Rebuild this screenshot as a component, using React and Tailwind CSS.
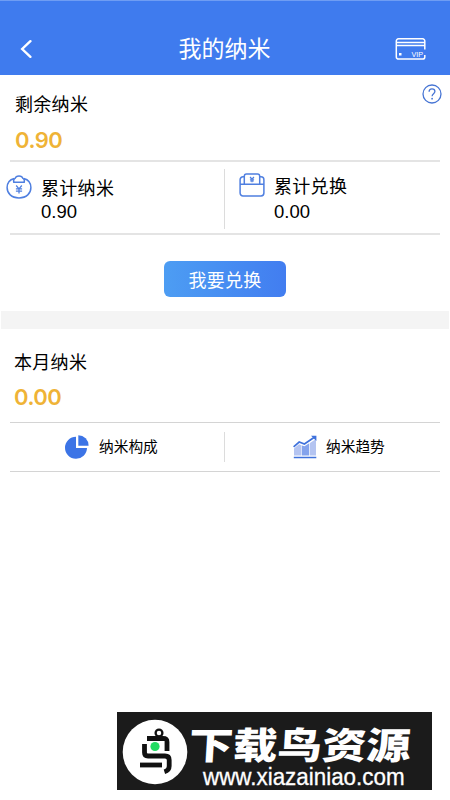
function BackIcon() {
  return (
    <svg className="h-5 w-3" viewBox="0 0 12 20" fill="none" stroke="white" strokeWidth="2.4" strokeLinecap="round">
      <path d="M10.4 2.2 2.2 10l8.2 7.8" />
    </svg>
  );
}

function VipCardIcon() {
  return (
    <svg className="h-[23px] w-[31px]" viewBox="0 0 31 23" fill="none" stroke="white" strokeWidth="1.5">
      <path d="M29.8 11.5V3a2.2 2.2 0 0 0-2.2-2.2H3.5A2.2 2.2 0 0 0 1.3 3v15.900a2.2 2.2 0 0 0 2.2 2.2h24.100a2.2 2.2 0 0 0 2.2-2.200V17" />
      <path d="M1.3 4.500h28.500M1.3 7.500h28.500" />
      <rect x="4" y="15" width="2.500" height="2.500" fill="white" stroke="none" />
      <text x="16.500" y="18.700" fontSize="7.200" fontFamily="Liberation Sans, sans-serif" fill="white" stroke="none">
        VIP
      </text>
    </svg>
  );
}

function HelpIcon() {
  return (
    <svg className="h-5 w-5" viewBox="0 0 20 20" fill="none" stroke="#4775d4" strokeWidth="1.3">
      <circle cx="10" cy="10" r="9" />
      <path d="M7.1 7.8C7.1 5.9 8.4 4.9 10 4.9s2.9 1 2.9 2.6c0 2.1-2.8 2.4-2.8 4.8" />
      <circle cx="10.1" cy="14.7" r=".9" fill="#4775d4" stroke="none" />
    </svg>
  );
}

function PurseIcon() {
  return (
    <svg className="h-6 w-[26px]" viewBox="0 0 26 24" fill="none" stroke="#4f7fe0" strokeWidth="1.5">
      <path d="M8.2 3.4C3.9 4.5 1.1 8 1.1 12.6c0 5.8 4.3 10.3 11.9 10.3s11.900-4.500 11.900-10.300c0-4.600-2.800-8.100-7.100-9.200" />
      <path d="M7.8 7.200c-.5-1.900 0-3.300 1.300-3.800C9.600 1.800 11 .9 13 .9s3.400.9 3.900 2.500c1.300.5 1.800 1.900 1.300 3.800Z" />
      <path strokeWidth="1.300" d="m10.200 10.500 2.800 3.300 2.800-3.300M13 13.800v4.700M9.900 13.800h6.200M9.900 16.100h6.200" />
    </svg>
  );
}

function WalletIcon() {
  return (
    <svg className="h-6 w-[26px]" viewBox="0 0 26 24" fill="none" stroke="#4f7fe0" strokeWidth="1.5">
      <path d="M5.300 11V3.200A2.200 2.200 0 0 1 7.500 1h11a2.200 2.200 0 0 1 2.200 2.200V11" />
      <path d="M5.300 3.800H4A2.900 2.900 0 0 0 1.100 6.700v13.400A2.900 2.900 0 0 0 4 23h18a2.900 2.900 0 0 0 2.900-2.900V6.700A2.900 2.900 0 0 0 22 3.800h-1.300M1.100 11.200h23.800" />
      <path strokeWidth="1.100" d="m11 4 2 2 2-2M13 6v3.200M10.900 6.300h4.200M11.200 7.900h3.600" />
    </svg>
  );
}

function PieIcon() {
  return (
    <svg className="h-6 w-6" viewBox="0 0 24 24" fill="#3c74e6">
      <path d="M11 1.800V13h11A11 11 0 1 1 11 1.800Z" />
      <path d="M13.300.3a10.300 10.300 0 0 1 10.300 10.400H13.300Z" />
    </svg>
  );
}

function TrendIcon() {
  return (
    <svg className="h-6 w-6" viewBox="0 0 24 24">
      <path fill="#b4c4f1" d="M1 13.500 6 9.300l2.500 1V20.500H1Z" />
      <path fill="#84a3ec" d="m9 10.500 2.500.8 4.700-3V20.500H9Z" />
      <path fill="#b4c4f1" d="M16.900 8 23 4v16.500h-6.100Z" />
      <path fill="none" stroke="#3f72dc" strokeWidth="1.700" d="M.6 11.800 6.200 7l5.200 2L21 2.500" />
      <path fill="#3f72dc" d="M18 .7h5.400V6ZM.8 21.700h22.500v1.500H.8Z" />
    </svg>
  );
}

function BirdLogo() {
  return (
    <svg className="h-[66px] w-[66px]" viewBox="0 0 66 66" fill="none" stroke="#111" strokeWidth="4.8" strokeLinejoin="round">
      <circle cx="33" cy="33" r="32.300" fill="white" stroke="none" />
      <circle cx="37" cy="14" r="3.400" strokeWidth="2.300" />
      <path d="M25 19.500H41c3 0 4 1 4 3.500V32" />
      <path d="M22.500 25v8.500c0 2.500 1 3.500 3.500 3.500H43c3 0 4.200 1.300 4.200 4v6c0 3.500-1.500 4.800-4.800 5.800" />
      <path d="M18 46h22" />
      <circle cx="33" cy="27.500" r="4.600" fill="#22dc62" stroke="none" />
    </svg>
  );
}

function Stat({ icon, label, value, className }) {
  return (
    <div className="flex">
      {icon}
      <div className={className}>
        <div>{label}</div>
        <div className="-mt-px font-['Liberation_Sans',sans-serif] text-[18.500px] tracking-normal">{value}</div>
      </div>
    </div>
  );
}

export default function App() {
  return (
    <div className="flex h-[800px] w-[450px] flex-col overflow-hidden bg-white font-['Inter','Noto_Sans_CJK_SC',sans-serif] text-black">
      <header className="flex h-[75px] shrink-0 items-center border-t border-[#6f9df3] bg-[#3f7bee] pt-[22px] pr-6 pl-5 text-white">
        <BackIcon />
        <h1 className="flex-1 pl-[22px] text-center text-[23px] leading-8">我的纳米</h1>
        <VipCardIcon />
      </header>

      <section className="h-[236px] shrink-0 px-[10px]">
        <div className="flex h-[87px] justify-between border-b-2 border-[#e4e4e4] pl-[5px]">
          <div>
            <div className="mt-[18px] text-lg leading-6 tracking-[0.3px]">剩余纳米</div>
            <div className="mt-[9px] text-[22px] leading-7 font-semibold tracking-[-0.5px] text-[#efb336]">0.90</div>
          </div>
          <div className="-mr-[2px] mt-[9px]">
            <HelpIcon />
          </div>
        </div>

        <div className="flex h-[73px] border-b-2 border-[#e4e4e4]">
          <div className="-ml-[4px] w-[218px] pt-[13px]">
            <Stat
              icon={<PurseIcon />}
              label="累计纳米"
              value="0.90"
              className="mt-[2px] ml-[9px] text-lg leading-6 tracking-[0.3px]"
            />
          </div>
          <div className="mt-[7px] h-[60px] w-px bg-[#dcdcdc]" />
          <div className="pt-[11px] pl-[14px]">
            <Stat
              icon={<WalletIcon />}
              label="累计兑换"
              value="0.00"
              className="mt-[1px] ml-[9px] text-lg leading-[26px] tracking-[0.3px]"
            />
          </div>
        </div>

        <button className="mx-auto mt-[26px] block h-9 w-[122px] rounded-md bg-linear-to-r from-[#4d9df3] to-[#427df0] pt-[3px] text-lg leading-[33px] tracking-[0.3px] text-white">
          我要兑换
        </button>
      </section>

      <div className="mx-px h-[18px] shrink-0 bg-[#f4f4f4]" />

      <section className="px-[10px]">
        <div className="h-[94px] border-b border-[#d4d4d4] pl-1">
          <div className="pt-[22px] text-lg leading-6 tracking-[0.3px]">本月纳米</div>
          <div className="mt-2 text-[22px] leading-7 font-semibold tracking-[-0.5px] text-[#efb336]">0.00</div>
        </div>
        <div className="flex h-[49px] items-center border-b border-[#d4d4d4] text-[14.700px]">
          <div className="flex w-[214px] items-center pl-[55px]">
            <PieIcon />
            <span className="mt-px ml-[10px]">纳米构成</span>
          </div>
          <div className="h-[30px] w-px bg-[#dcdcdc]" />
          <div className="flex items-center pl-[68px]">
            <TrendIcon />
            <span className="mt-px ml-[9px]">纳米趋势</span>
          </div>
        </div>
      </section>

      <footer className="mt-auto mb-[10px] ml-[117px] flex h-[78px] w-[315px] bg-[#1b1b1b] pl-[5px] text-white">
        <div className="mt-[7px]">
          <BirdLogo />
        </div>
        <div className="ml-[1px] whitespace-nowrap">
          <div className="mt-[8px] h-[44px] origin-left -skew-x-3 scale-x-[1.200] font-['Noto_Sans_CJK_SC',sans-serif] text-[37px] leading-[46px] font-black">
            下载鸟资源
          </div>
          <div className="mt-px ml-[14px] h-6 origin-left scale-y-110 font-['Liberation_Sans',sans-serif] text-[22.400px] leading-6 [-webkit-text-stroke:0.3px_white]">
            www.xiazainiao.com
          </div>
        </div>
      </footer>
    </div>
  );
}
